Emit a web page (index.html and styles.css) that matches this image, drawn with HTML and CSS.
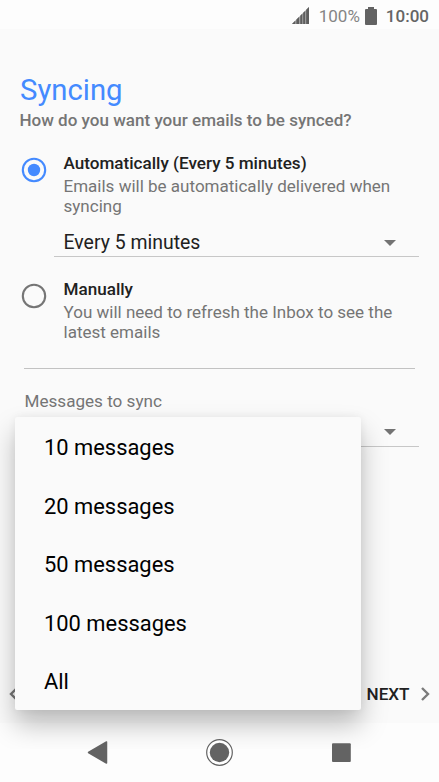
FILE: index.html
```html
<!DOCTYPE html>
<html lang="en">
<head>
<meta charset="utf-8">
<title>Syncing</title>
<link rel="stylesheet" href="styles.css">
</head>
<body>
<div class="phone">
  <header class="status">
    <svg class="signal" width="17" height="17" viewBox="0 0 17 17"><path d="M0 17 17 0V17Z" fill="#a2a2a2"/><path d="M0 17 3.2 13.8V17ZM4.4 17V12.6L7 10V17ZM8.3 17V8.7L10.2 6.8V17ZM11.2 17V5.8L13.1 3.9V17ZM14.2 17V2.8L17 0V17Z" fill="#5e5e5e"/></svg>
    <span class="percent">100%</span>
    <svg class="battery" width="12" height="18" viewBox="0 0 12 18"><path d="M3 0H9V2H11Q12 2 12 3V17Q12 18 11 18H1Q0 18 0 17V3Q0 2 1 2H3Z" fill="#636363"/></svg>
    <span class="clock">10:00</span>
  </header>
  <main class="content">
    <h1 class="title">Syncing</h1>
    <p class="question">How do you want your emails to be synced?</p>
    <section class="option auto">
      <svg class="radio" width="26" height="26" viewBox="0 0 26 26"><circle cx="13" cy="13" r="11.2" fill="none" stroke="#448aff" stroke-width="2.1"/><circle cx="13" cy="13" r="6.2" fill="#448aff"/></svg>
      <div class="option-text">
        <h2>Automatically (Every 5 minutes)</h2>
        <p>Emails will be automatically delivered when<br>syncing</p>
      </div>
    </section>
    <div class="select interval">
      <span>Every 5 minutes</span>
      <svg class="caret" width="12" height="6" viewBox="0 0 12 6"><path d="M0 0H12L6 6Z" fill="#737373"/></svg>
    </div>
    <section class="option manual">
      <svg class="radio" width="26" height="26" viewBox="0 0 26 26"><circle cx="13" cy="13" r="11.2" fill="none" stroke="#757575" stroke-width="2.1"/></svg>
      <div class="option-text">
        <h2>Manually</h2>
        <p>You will need to refresh the Inbox to see the<br>latest emails</p>
      </div>
    </section>
    <hr class="divider">
    <p class="label">Messages to sync</p>
    <div class="select count">
      <svg class="caret" width="12" height="6" viewBox="0 0 12 6"><path d="M0 0H12L6 6Z" fill="#737373"/></svg>
    </div>
  </main>
  <footer class="pager">
    <svg width="9" height="14" viewBox="0 0 9 14"><path d="M8 1 2 7 8 13" fill="none" stroke="#757575" stroke-width="2.4"/></svg>
    <span class="next">NEXT <svg width="9" height="14" viewBox="0 0 9 14"><path d="M1 1 7 7 1 13" fill="none" stroke="#7b7b7b" stroke-width="2.4"/></svg></span>
  </footer>
  <nav class="navbar">
    <svg width="439" height="59" viewBox="0 0 439 59"><path d="M88.5 29.5 106.5 19V40Z" fill="#636363" stroke="#636363" stroke-width="1.5" stroke-linejoin="round"/><circle cx="219.5" cy="29.5" r="12.8" fill="#fff" stroke="#636363" stroke-width="1.2"/><circle cx="219.5" cy="29.5" r="9.7" fill="#636363"/><rect x="332" y="20.3" width="18.8" height="18.8" rx="1" fill="#636363"/></svg>
  </nav>
  <div class="menu-layer">
    <ul class="menu">
      <li>10 messages</li>
      <li>20 messages</li>
      <li>50 messages</li>
      <li>100 messages</li>
      <li>All</li>
    </ul>
  </div>
</div>
</body>
</html>
```
FILE: styles.css
```css
* { box-sizing: border-box; }
body { margin: 0; }
h1, h2, p, ul { margin: 0; padding: 0; }
svg { display: block; flex: none; }

.phone {
  position: relative;
  display: flex;
  flex-direction: column;
  width: 439px;
  height: 782px;
  overflow: hidden;
  background: #fafafa;
  color: #212121;
  font-family: Roboto, "Liberation Sans", sans-serif;
  white-space: nowrap;
}

.status {
  display: flex;
  align-items: center;
  justify-content: flex-end;
  height: 29px;
  padding: 2px 10px 0 0;
  background: #fdfdfd;
  font-size: 17px;
  line-height: 20px;
}
.signal { margin-right: 10px; }
.percent { color: #858585; }
.battery { margin: 0 9px 0 5px; }
.clock { color: #656565; font-weight: 500; }

.content { flex: 1; padding-top: 44px; }
.title {
  padding-left: 20px;
  color: #448aff;
  font-size: 29.3px;
  font-weight: 400;
  line-height: 34px;
}
.question {
  margin-top: 3px;
  padding-left: 19.5px;
  color: #757575;
  font-size: 17.05px;
  font-weight: 500;
  line-height: 20px;
}
.option { display: flex; gap: 16.5px; padding-left: 21px; }
.auto { margin-top: 23px; }
.radio { margin-top: 4px; }
.option h2 { font-size: 17.1px; font-weight: 500; line-height: 20px; }
.option p {
  margin-top: 3px;
  color: #757575;
  font-size: 17.03px;
  line-height: 20px;
}
.select {
  display: flex;
  align-items: center;
  justify-content: space-between;
  height: 30px;
  margin: 11px 20px 0 54px;
  padding: 0 23px 0 9.5px;
  border-bottom: 1px solid #c7c7c7;
  font-size: 19.45px;
  line-height: 24px;
}
.interval { margin-top: 11px; padding-top: 2px; }
.manual { margin-top: 22px; }
.manual .radio { margin-top: 4.4px; }
.divider {
  height: 1px;
  margin: 26px 24.5px 0 24px;
  border: 0;
  background: #c2c2c2;
}
.label {
  margin-top: 22px;
  padding-left: 24.5px;
  color: #757575;
  font-size: 17.1px;
  line-height: 20px;
}
.count { justify-content: flex-end; margin: 6px 20px 0 24px; }

.pager {
  display: flex;
  align-items: center;
  justify-content: space-between;
  height: 59px;
  padding: 0 9.5px 0 9px;
  font-size: 17.1px;
  font-weight: 500;
}
.next { display: flex; align-items: center; gap: 11px; }
.navbar { height: 59px; background: #fdfdfd; }

.menu-layer {
  position: absolute;
  inset: 0 0 33px;
  overflow: hidden;
  pointer-events: none;
}
.menu {
  position: absolute;
  top: 417px;
  left: 15px;
  width: 346px;
  height: 293px;
  border-radius: 2px;
  background: #fafafa;
  box-shadow: 0 15px 27px rgba(0, 0, 0, .25), 0 0 9px rgba(0, 0, 0, .06);
  color: #000;
  font-size: 21.9px;
  list-style: none;
}
.menu li { height: 58.6px; padding-left: 29px; line-height: 61.5px; }
.navbar svg { position: relative; z-index: 1; }
```
